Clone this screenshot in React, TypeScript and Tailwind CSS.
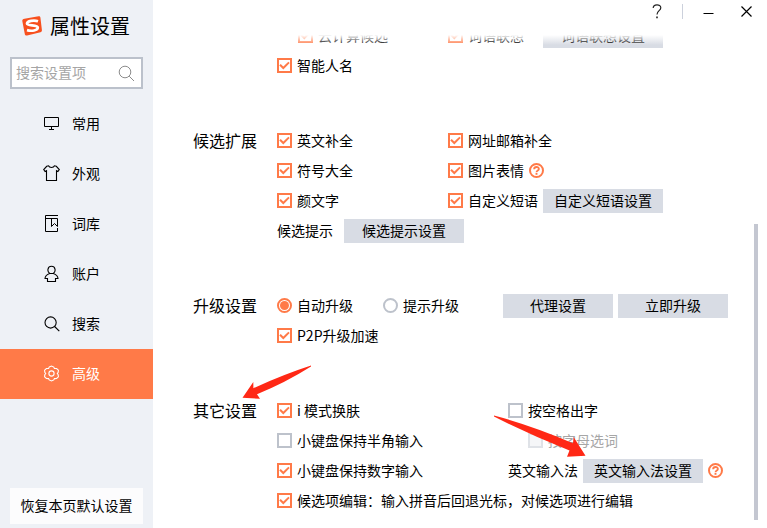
import { useState, type ReactNode } from "react";

const FONT = "font-['Noto_Sans_CJK_SC',sans-serif]";

function Tick({ className }: { className: string }) {
  return (
    <svg viewBox="0 0 15 15" className={className} fill="none" stroke="#ff7a48" strokeWidth="2" aria-hidden="true">
      <path d="M3 6.7 L6.3 10 L12 4.4" />
    </svg>
  );
}

function Check({ label, on = false, disabled = false }: { label: string; on?: boolean; disabled?: boolean }) {
  return (
    <label
      className={
        disabled
          ? "flex items-center gap-[5px] pb-px leading-[19px] text-[#a6a6a6]"
          : "flex items-center gap-[5px] pb-px leading-[19px]"
      }
    >
      <span className="grid size-[15px] shrink-0">
        <input
          type="checkbox"
          defaultChecked={on}
          disabled={disabled}
          className="peer col-start-1 row-start-1 size-[15px] appearance-none border-2 border-[#bdc2cb] bg-white checked:border-[#ff7a48] disabled:border-[#dfe2e7] disabled:bg-[#f5f6f8]"
        />
        <Tick className="pointer-events-none invisible col-start-1 row-start-1 size-[15px] peer-checked:visible" />
      </span>
      <span className="whitespace-nowrap">{label}</span>
    </label>
  );
}

function Radio({ label, on = false }: { label: string; on?: boolean }) {
  return (
    <label className="flex items-center gap-[5px] pb-px leading-[19px]">
      <span className="grid size-[15px] shrink-0 place-items-center">
        <input
          type="radio"
          name="upgrade"
          defaultChecked={on}
          className="peer col-start-1 row-start-1 size-[15px] appearance-none rounded-full border-2 border-[#bdc2cb] bg-white checked:border-[#ff7a48]"
        />
        <span className="pointer-events-none invisible col-start-1 row-start-1 size-[9px] rounded-full bg-[#ff7a48] peer-checked:visible" />
      </span>
      <span className="whitespace-nowrap">{label}</span>
    </label>
  );
}

function Button({ children, narrow = false }: { children: ReactNode; narrow?: boolean }) {
  return (
    <button
      type="button"
      className={
        narrow
          ? "h-6 w-[110px] shrink-0 bg-[#d8dce4] pb-0.5 whitespace-nowrap"
          : "h-6 w-[120px] shrink-0 bg-[#d8dce4] pb-0.5 whitespace-nowrap"
      }
    >
      {children}
    </button>
  );
}

function Help({ label }: { label: string }) {
  return (
    <button type="button" aria-label={label} className="h-4 w-[15px] shrink-0 pb-px">
      <svg viewBox="0 0 15 15" className="size-[15px]" fill="none" stroke="#ff7a48" aria-hidden="true">
        <circle cx="7.5" cy="7.5" r="6.5" strokeWidth="2" />
        <path d="M5.1 6.3 C5.1 3.3 9.9 3.3 9.9 5.9 C9.9 7.5 7.5 7.4 7.5 9.2" strokeWidth="1.8" />
        <path d="M7.5 10 V11.8" strokeWidth="1.9" />
      </svg>
    </button>
  );
}

function Section({ title, children }: { title: string; children: ReactNode }) {
  return (
    <section className="grid grid-cols-[84px_1fr]">
      <h2 className="text-base leading-7">{title}</h2>
      <div>{children}</div>
    </section>
  );
}

function Row({ left, right, wide = false }: { left: ReactNode; right?: ReactNode; wide?: boolean }) {
  return (
    <div className={wide ? "grid h-[30px] grid-cols-[231px_1fr]" : "grid h-[30px] grid-cols-[171px_1fr]"}>
      <div className="flex items-center">{left}</div>
      <div className="flex items-center gap-[5px]">{right}</div>
    </div>
  );
}

const stroke = { fill: "none", stroke: "currentColor" };

const NAV = [
  {
    name: "常用",
    icon: (
      <g {...stroke}>
        <path d="M1.5 2.5 H15.5 V11.5 H1.5 Z M8.5 11.5 V14.5 M6 14.5 H11" />
      </g>
    ),
  },
  {
    name: "外观",
    icon: (
      <g {...stroke} strokeWidth="1.1">
        <path d="M5.5 .8 C6.5 3 10.5 3 11.5 .8 L13.3 1.3 L16.3 4.6 L14.9 6.5 L13.5 5.7 V15.5 H3.5 V5.7 L2.1 6.5 L.7 4.6 L3.7 1.3 Z" />
      </g>
    ),
  },
  {
    name: "词库",
    icon: (
      <g {...stroke}>
        <path d="M15 .5 H2.5 V16.5 H14.5 V13 M2.5 3.5 H14.5 V11.5 L11.5 8.5 L8.5 11.5 V3.5" />
      </g>
    ),
  },
  {
    name: "账户",
    icon: (
      <g {...stroke} strokeWidth="1.1">
        <path d="M6.7 8.5 C3.8 6.5 4.5 1.3 8.5 1.3 C12.5 1.3 13.2 6.5 10.3 8.5 M6.7 8.5 H10.3 M6.7 8.5 C4.5 9.2 2.2 11 2 13.5 H4.5 V16.5 H12.5 V13.5 H15 C14.8 11 12.5 9.2 10.3 8.5" />
      </g>
    ),
  },
  {
    name: "搜索",
    icon: (
      <g {...stroke} strokeWidth="1.1">
        <circle cx="7.6" cy="7.5" r="5.6" />
        <path d="M11.6 11.5 L16.3 16.2" />
      </g>
    ),
  },
  {
    name: "高级",
    icon: (
      <g {...stroke} strokeWidth="1.1">
        <path d="M6.2 2.1 L8.5 1 L10.8 2.1 L11.4 3.4 L13.6 3.5 L15.4 5.2 L15.2 7.4 L14.3 8.5 L15.2 9.6 L15.4 11.8 L13.6 13.5 L11.4 13.6 L10.8 14.9 L8.5 16 L6.2 14.9 L5.6 13.6 L3.4 13.5 L1.6 11.8 L1.8 9.6 L2.7 8.5 L1.8 7.4 L1.6 5.2 L3.4 3.5 L5.6 3.4 Z" />
        <circle cx="8.5" cy="8.5" r="2.6" />
      </g>
    ),
  },
];

function Sidebar() {
  const [active, setActive] = useState("高级");
  return (
    <aside className="flex w-[153px] shrink-0 flex-col bg-[#eef1f6]">
      <div className="flex h-[57px] items-center gap-2 pb-[5px] pl-[22px]">
        <svg viewBox="0 0 20 20" className="size-5 shrink-0" aria-hidden="true">
          <path d="M2.5 2.7 L16.5 .3 C17.6 .1 18.2 .6 18.4 1.6 L19.9 14 C20 15.2 19.6 15.8 18.5 16.2 L5 19.4 C3.8 19.7 3 19.2 2.8 18 L.3 5 C.1 3.7 1 3 2.5 2.7 Z" fill="#f7501e" />
          <path
            d="M16 5.2 C12 3.8 5 4.8 5 7.6 C5 10.4 15.8 8.3 15.8 11.6 C15.8 14.6 9.5 15.4 5 14.1"
            fill="none"
            stroke="#fff"
            strokeWidth="2.7"
          />
        </svg>
        <h1 className="text-xl leading-7 whitespace-nowrap">属性设置</h1>
      </div>
      <div className="mx-[10px] flex h-8 items-center border-2 border-[#bbc1cb] bg-white pr-[6px] pl-1">
        <input
          type="text"
          aria-label="搜索设置项"
          placeholder="搜索设置项"
          className="w-full min-w-0 flex-1 bg-transparent pb-0.5 text-sm outline-none placeholder:text-[#a5a5a5]"
        />
        <svg viewBox="0 0 17 17" className="size-[17px] shrink-0" fill="none" stroke="#8c8c8c" aria-hidden="true">
          <circle cx="7" cy="7" r="5.8" />
          <path d="M11.2 11.2 L16 16" />
        </svg>
      </div>
      <nav className="mt-[10px] flex flex-col">
        {NAV.map((item) => (
          <button
            key={item.name}
            type="button"
            onClick={() => setActive(item.name)}
            className={
              item.name === active
                ? "flex h-[50px] items-center gap-3 bg-[#ff7a48] pb-px pl-[43px] leading-[19px] text-white"
                : "flex h-[50px] items-center gap-3 pb-px pl-[43px] leading-[19px]"
            }
          >
            <svg viewBox="0 0 17 17" className="size-[17px] shrink-0" aria-hidden="true">
              {item.icon}
            </svg>
            {item.name}
          </button>
        ))}
      </nav>
      <button type="button" className="mx-[10px] mt-auto mb-1 h-9 bg-[#fcfcfd] pb-0.5 whitespace-nowrap">
        恢复本页默认设置
      </button>
    </aside>
  );
}

function TitleBar() {
  return (
    <header className="flex h-[35px] shrink-0 items-start justify-end pr-[11px]">
      <button type="button" aria-label="帮助" className="grid h-[23px] w-5 place-items-center">
        <svg viewBox="0 0 10 15" className="h-[15px] w-[10px]" fill="none" stroke="#222" strokeWidth="1.2" aria-hidden="true">
          <path d="M1.2 4 C1.2 -.2 8.8 -.2 8.8 3.8 C8.8 6.8 5 6.6 5 10.5" />
          <path d="M5 12.4 V14.2" strokeWidth="1.6" />
        </svg>
      </button>
      <span className="mt-1 ml-[15px] h-[15px] w-px bg-[#ccd1dc]" />
      <button type="button" aria-label="最小化" className="ml-[15px] grid h-[23px] w-5 place-items-center">
        <svg viewBox="0 0 11 11" className="size-[11px]" stroke="#000" aria-hidden="true">
          <path d="M.5 7.5 H10.5" />
        </svg>
      </button>
      <button type="button" aria-label="关闭" className="ml-[18px] grid h-[23px] w-5 place-items-center">
        <svg viewBox="0 0 11 11" className="size-[11px]" stroke="#000" strokeWidth="1.2" aria-hidden="true">
          <path d="M.5 .5 L10.5 10.5 M10.5 .5 L.5 10.5" />
        </svg>
      </button>
    </header>
  );
}

export default function App() {
  return (
    <div lang="zh-CN" className={`${FONT} relative flex h-screen overflow-hidden bg-white text-sm text-black`}>
      <Sidebar />
      <main className="flex min-w-0 flex-1 flex-col">
        <TitleBar />
        <div className="relative flex min-h-0 flex-1 pr-[9px] pb-2">
          <div className="min-w-0 flex-1 overflow-hidden pl-10">
            <div className="-mt-[14px] flex flex-col gap-[45px]">
              <Section title="">
                <Row
                  left={
                    <div className="pl-[21px]">
                      <Check label="云计算候选" on />
                    </div>
                  }
                  right={
                    <>
                      <Check label="词语联想" on />
                      <div className="pl-[14px]">
                        <Button>词语联想设置</Button>
                      </div>
                    </>
                  }
                />
                <Row left={<Check label="智能人名" on />} />
              </Section>

              <Section title="候选扩展">
                <Row left={<Check label="英文补全" on />} right={<Check label="网址邮箱补全" on />} />
                <Row
                  left={<Check label="符号大全" on />}
                  right={
                    <>
                      <Check label="图片表情" on />
                      <Help label="图片表情说明" />
                    </>
                  }
                />
                <Row
                  left={<Check label="颜文字" on />}
                  right={
                    <>
                      <Check label="自定义短语" on />
                      <Button>自定义短语设置</Button>
                    </>
                  }
                />
                <div className="flex h-[30px] items-center gap-[11px]">
                  <span className="pb-px leading-[19px]">候选提示</span>
                  <Button>候选提示设置</Button>
                </div>
              </Section>

              <Section title="升级设置">
                <div className="grid h-[30px] grid-cols-[106px_120px_1fr] items-center">
                  <Radio label="自动升级" on />
                  <Radio label="提示升级" />
                  <div className="flex gap-[5px]">
                    <Button narrow>代理设置</Button>
                    <Button narrow>立即升级</Button>
                  </div>
                </div>
                <Row left={<Check label="P2P升级加速" on />} />
              </Section>

              <Section title="其它设置">
                <Row wide left={<Check label="i 模式换肤" on />} right={<Check label="按空格出字" />} />
                <Row
                  wide
                  left={<Check label="小键盘保持半角输入" />}
                  right={
                    <div className="pl-5">
                      <Check label="按字母选词" disabled />
                    </div>
                  }
                />
                <Row
                  wide
                  left={<Check label="小键盘保持数字输入" on />}
                  right={
                    <>
                      <span className="pb-px leading-[19px]">英文输入法</span>
                      <Button>英文输入法设置</Button>
                      <Help label="英文输入法说明" />
                    </>
                  }
                />
                <div className="flex h-[30px] items-center">
                  <Check label="候选项编辑：输入拼音后回退光标，对候选项进行编辑" on />
                </div>
              </Section>
            </div>
          </div>
          <div className="flex w-1 shrink-0 flex-col justify-end">
            <div className="h-[61%] bg-[#c4c7d1]" />
          </div>
          <div className="pointer-events-none absolute inset-x-0 top-0 h-[10px] bg-linear-to-b from-white to-white/0" />
        </div>
      </main>

      {/* Pointers over the section title and the English input settings button */}
      <svg className="pointer-events-none absolute top-0 left-0 h-[528px] w-[767px]" viewBox="0 0 767 528" fill="#ff2815" aria-hidden="true">
        <path d="M311 365.6 Q285 374 253.4 388.2 L253.3 382 L242.5 397.7 L260 398.8 L257 394.3 Q285 383 311 366.6 Z" />
        <path d="M494 415.6 Q530 425 573 443.2 L573.6 437 L585.5 455.7 L567 456.8 L569.5 450.5 Q530 435 494 416.6 Z" />
      </svg>
    </div>
  );
}
